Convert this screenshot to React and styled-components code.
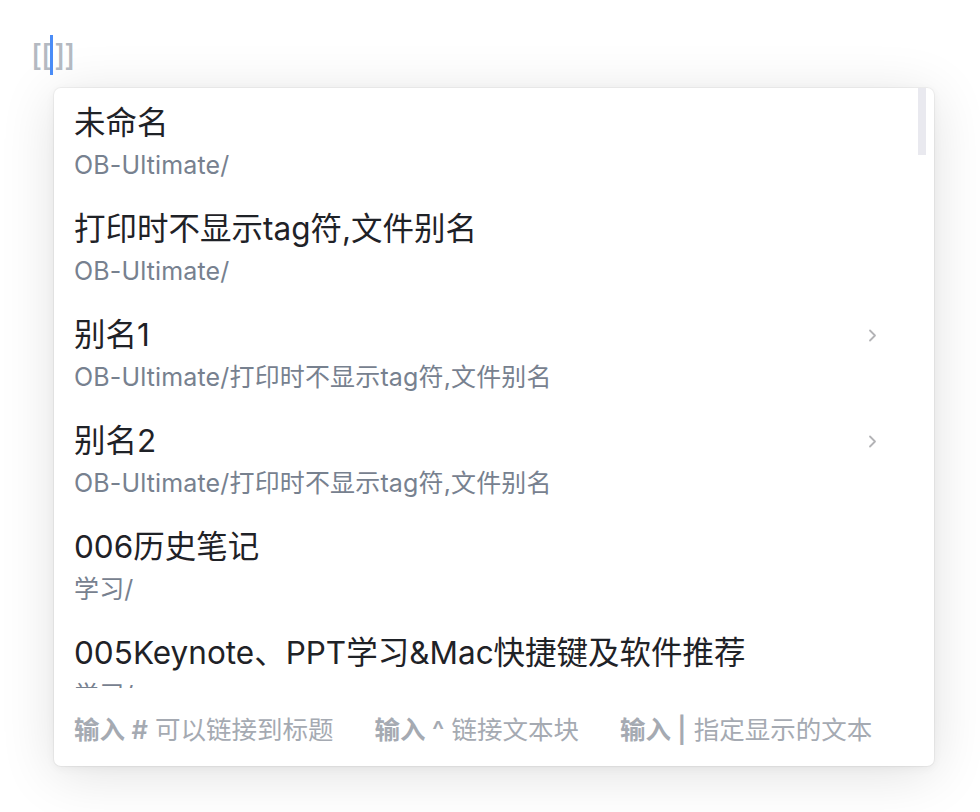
import React from 'react'
import styled, { createGlobalStyle } from 'styled-components'

const items = [
  { title: '未命名', path: 'OB-Ultimate/' },
  { title: '打印时不显示tag符,文件别名', path: 'OB-Ultimate/' },
  { title: '别名1', path: 'OB-Ultimate/打印时不显示tag符,文件别名', alias: true },
  { title: '别名2', path: 'OB-Ultimate/打印时不显示tag符,文件别名', alias: true },
  { title: '006历史笔记', path: '学习/' },
  { title: '005Keynote、PPT学习&Mac快捷键及软件推荐', path: '学习/' },
]

const hints = [
  { key: '输入 #', text: '可以链接到标题' },
  { key: '输入 ^', text: '链接文本块' },
  { key: '输入 |', text: '指定显示的文本' },
]

export default function App() {
  return (
    <Page>
      <GlobalStyle />
      <EditorLine>
        <Bracket>[[</Bracket>
        <Caret />
        <Bracket>]]</Bracket>
      </EditorLine>
      <Popup>
        <List>
          {items.map(item => (
            <Item key={item.title}>
              <TitleRow>
                <Title>{item.title}</Title>
                {item.alias && <Chevron />}
              </TitleRow>
              <Path>{item.path}</Path>
            </Item>
          ))}
          <ScrollThumb />
        </List>
        <Footer>
          {hints.map(h => (
            <Hint key={h.key}>
              <strong>{h.key}</strong> {h.text}
            </Hint>
          ))}
        </Footer>
      </Popup>
    </Page>
  )
}

function Chevron() {
  return (
    <ChevronSvg width='9' height='13' viewBox='0 0 9 13'>
      <path d='M2 1.5l5 5-5 5' fill='none' stroke='currentColor' strokeWidth='1.8' strokeLinecap='round' strokeLinejoin='round' />
    </ChevronSvg>
  )
}

const GlobalStyle = createGlobalStyle`
  html, body {
    margin: 0;
    padding: 0;
    background: #ffffff;
  }
  body {
    font-family: Inter, "Noto Sans CJK SC", sans-serif;
    -webkit-font-smoothing: antialiased;
  }
`

const Page = styled.div`
  width: 980px;
  height: 812px;
  overflow: hidden;
  padding-top: 35px;
  box-sizing: border-box;
`

const EditorLine = styled.div`
  display: flex;
  align-items: center;
  height: 40px;
  padding-left: 31px;
`

const Bracket = styled.span`
  font-size: 30px;
  line-height: 40px;
  font-weight: 500;
  color: #b4b9c1;
  letter-spacing: -1px;
`

const Caret = styled.span`
  width: 3px;
  height: 40px;
  margin: 0 1px 0 -1px;
  background: #4a8cf7;
`

const Popup = styled.div`
  width: 880px;
  margin: 13px 0 0 54px;
  background: #ffffff;
  border-radius: 7px;
  box-shadow: 0 0 0 1px rgba(0, 0, 0, 0.04), 0 8px 56px rgba(0, 0, 0, 0.12), 0 2px 10px rgba(0, 0, 0, 0.05);
  overflow: hidden;
`

const List = styled.div`
  position: relative;
  height: 600px;
  overflow: hidden;
`

const ScrollThumb = styled.div`
  position: absolute;
  top: 0;
  right: 8px;
  width: 8px;
  height: 67px;
  background: #e9e9ef;
`

const Item = styled.div`
  padding: 15px 57px 7px 20px;
`

const TitleRow = styled.div`
  display: flex;
  align-items: center;
  justify-content: space-between;
  height: 40px;
`

const Title = styled.div`
  font-size: 31.5px;
  line-height: 40px;
  color: #1f2227;
  white-space: nowrap;
`

const ChevronSvg = styled.svg`
  color: #b3b3b6;
  flex: none;
`

const Path = styled.div`
  font-size: 25px;
  line-height: 44px;
  letter-spacing: 0.15px;
  color: #77818f;
  white-space: nowrap;
`

const Footer = styled.div`
  display: flex;
  align-items: center;
  gap: 41px;
  height: 78px;
  padding-left: 20px;
`

const Hint = styled.span`
  font-size: 25.5px;
  color: #a5aab2;
  white-space: nowrap;

  strong {
    font-weight: 600;
  }
`
